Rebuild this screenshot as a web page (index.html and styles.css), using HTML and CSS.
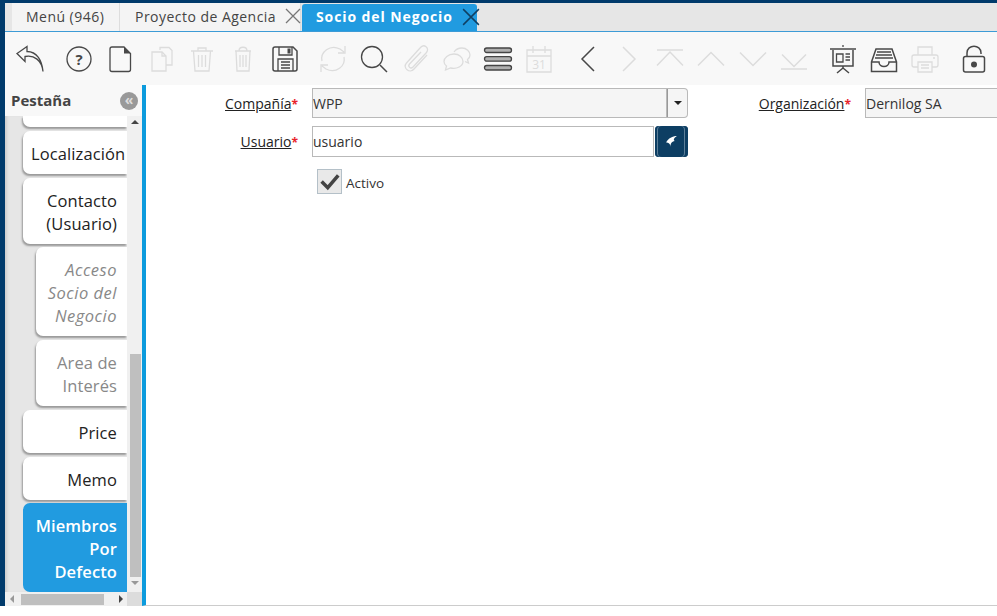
FILE: index.html

```html
<!DOCTYPE html>
<html lang="es">
<head>
<meta charset="UTF-8">
<title>Socio del Negocio</title>
<link rel="stylesheet" href="styles.css">
</head>
<body>
<div class="app">
  <div class="tabbar">
    <div class="wintab first">Menú (946)</div>
    <div class="wintab">Proyecto de Agencia
      <svg class="close" viewBox="0 0 16 16"><path d="M1 1L15 15M15 1L1 15"/></svg>
    </div>
    <div class="wintab current">Socio del Negocio
      <svg class="close" viewBox="0 0 16 16"><path d="M1 1L15 15M15 1L1 15"/></svg>
    </div>
  </div>

  <div class="toolbar">
    <button class="tool"><svg viewBox="0 0 32 32"><path d="M13 3.5L3 10.5L11 18.5V13.5C20 11.5 28 17.5 29 28.5C28 17.5 23 8.5 13 8.5Z"/></svg></button>
    <button class="tool sep"><svg viewBox="0 0 32 32"><circle cx="16" cy="16" r="12"/><text x="16" y="21.5" class="glyph">?</text></svg></button>
    <button class="tool"><svg viewBox="0 0 32 32"><path d="M8 4H20L26.5 10.5V26.5a2 2 0 0 1-2 2H8a2 2 0 0 1-2-2V6a2 2 0 0 1 2-2Z"/><path class="solid" d="M20 4V10.5H26.5Z"/></svg></button>
    <button class="tool off"><svg viewBox="0 0 32 32"><path d="M15 7V4.5H24L27 7.5V22H21"/><path d="M7 9H17L21 13V28H7Z"/><path d="M17 9V13H21"/></svg></button>
    <button class="tool off"><svg viewBox="0 0 32 32"><path d="M5 8H27M12 8V5H20V8M7.5 8L9 28H23L24.5 8M12.5 12V24M16 12V24M19.5 12V24"/></svg></button>
    <button class="tool off"><svg viewBox="0 0 32 32"><path d="M8 8H24M12 8C12 3 20 3 20 8M9 8L10 28H22L23 8M13 12V24M16 12V24M19 12V24"/></svg></button>
    <button class="tool"><svg viewBox="0 0 32 32"><path class="bold" d="M6 4H24L28 8V26a2 2 0 0 1-2 2H6a2 2 0 0 1-2-2V6a2 2 0 0 1 2-2Z"/><path d="M10 4V12H23V4M9 28V16H24V28"/><path class="solid" d="M18.5 5.500H21.5V10.5H18.5Z"/><path d="M12 19H21M12 22H21M12 25H21"/></svg></button>
    <button class="tool sep off"><svg viewBox="0 0 32 32"><path d="M5 18C3 9 13 1 23 6L27 9M28 3V10H21M27 14C29 23 19 31 9 26L5 23M4 29V22H11"/></svg></button>
    <button class="tool"><svg viewBox="0 0 32 32"><circle cx="14" cy="14" r="10.5"/><path class="bold" d="M22 22L29 29"/></svg></button>
    <button class="tool off"><svg viewBox="0 0 32 32"><path d="M27 12L14 26C10 31 2 25 6.5 20L20 5C24 0 30 5 26.5 9.5L13 24C10.5 26.5 7.5 23.5 9.5 21L21 9"/></svg></button>
    <button class="tool off"><svg viewBox="0 0 32 32"><path d="M13 11C7 11 3 15 3 18.5C3 20.5 4 22 5.5 23L4.5 27L9.5 25C16 26.5 22 23 22 18.5C22 14.5 18 11 13 11Z"/><path d="M13 9C15 6 18.5 5 21 5C25.5 5 29 8.5 29 12C29 14 28 15.5 26.5 16.5L27.5 20L24 18.5"/></svg></button>
    <button class="tool"><svg viewBox="0 0 32 32"><rect class="bar" x="2.5" y="5" width="27" height="4.500" rx="2.2"/><rect class="bar" x="2.5" y="13.700" width="27" height="4.500" rx="2.2"/><rect class="bar" x="2.5" y="22.500" width="27" height="4.500" rx="2.2"/></svg></button>
    <button class="tool off"><svg viewBox="0 0 32 32"><path d="M4 7H28V29H4ZM4 13H28M10 3V10M22 3V10"/><text x="16" y="26" class="cal">31</text></svg></button>
    <button class="tool sep"><svg viewBox="0 0 32 32"><path class="bold" d="M22 4L10 16L22 28"/></svg></button>
    <button class="tool off"><svg viewBox="0 0 32 32"><path class="bold" d="M10 4L22 16L10 28"/></svg></button>
    <button class="tool off"><svg viewBox="0 0 32 32"><path class="bold" d="M3 7H29M3 22.500L16 9L29 22.500"/></svg></button>
    <button class="tool off"><svg viewBox="0 0 32 32"><path class="bold" d="M3 22.500L16 9.500L29 22.500"/></svg></button>
    <button class="tool off"><svg viewBox="0 0 32 32"><path class="bold" d="M3 9.500L16 22.500L29 9.500"/></svg></button>
    <button class="tool off"><svg viewBox="0 0 32 32"><path class="bold" d="M4 11.500L16 23.500L28 11.500M3 26H29"/></svg></button>
    <button class="tool sep"><svg viewBox="0 0 32 32"><path class="bold" d="M3 6H29"/><path d="M16 2V4"/><path class="bold" d="M6 7V23H26V7M16 23V26M16 25L10 30M16 25L22 30"/><path d="M9.5 11H16V19H9.5ZM18.5 11H23M18.5 14H23M18.5 17H23"/></svg></button>
    <button class="tool"><svg viewBox="0 0 32 32"><path class="bold" d="M3.5 19V28.5H28.5V19L24 6H8Z"/><path class="bold" d="M3.5 19H11C11 25 21 25 21 19H28.5"/><path d="M9 9H23M8 12H24M7 15H25"/></svg></button>
    <button class="tool off"><svg viewBox="0 0 32 32"><path d="M9 12V4H23V12M9 24H5a2 2 0 0 1-2-2V14a2 2 0 0 1 2-2H27a2 2 0 0 1 2 2V22a2 2 0 0 1-2 2H23"/><path d="M9 19H23V29H9ZM12 22H20M12 25H20M24 15H26"/></svg></button>
    <button class="tool sep"><svg viewBox="0 0 32 32"><path class="bold" d="M9 13V10C9 1 23 1 23 10V11"/><rect class="bold" x="5.5" y="13.500" width="21" height="15.500" rx="2"/><circle class="solid" cx="16" cy="21.500" r="3"/></svg></button>
  </div>

  <div class="content">
    <aside class="sidebar">
      <div class="side-head">
        <span class="side-title">Pestaña</span>
        <span class="collapse">«</span>
      </div>
      <div class="side-body">
        <div class="tab-list">
          <div class="tab cut"></div>
          <div class="tab">Localización</div>
          <div class="tab">Contacto<br>(Usuario)</div>
          <div class="tab sub tight"><em>Acceso<br>Socio del<br>Negocio</em></div>
          <div class="tab sub">Area de<br>Interés</div>
          <div class="tab">Price</div>
          <div class="tab">Memo</div>
          <div class="tab active tight">Miembros<br>Por<br>Defecto</div>
        </div>
        <div class="vscroll">
          <span class="arrow up"></span>
          <span class="vtrack"><span class="vthumb"></span></span>
          <span class="arrow down"></span>
        </div>
      </div>
      <div class="hscroll">
        <span class="arrow left"></span>
        <span class="hthumb"></span>
        <span class="arrow right"></span>
        <span class="corner"></span>
      </div>
    </aside>

    <main class="form-area">
      <div class="form">
        <label class="lbl"><u>Compañía</u><b>*</b></label>
        <div class="combo">
          <input class="field ro" type="text" value="WPP" readonly>
          <span class="combo-btn"><span class="caret"></span></span>
        </div>
        <label class="lbl"><u>Organización</u><b>*</b></label>
        <input class="field ro" type="text" value="Dernilog SA" readonly>

        <label class="lbl"><u>Usuario</u><b>*</b></label>
        <div class="combo">
          <input class="field" type="text" value="usuario">
          <span class="search-btn"><svg viewBox="0 0 12 12"><path d="M11 1C7 1 3 3 1 7C3 7 5 8 5 11C5 8 6 6 9 5.500C7.5 5 8 3 11 1Z"/></svg></span>
        </div>
        <div class="check-row">
          <span class="checkbox"><svg viewBox="0 0 24 24"><path d="M3 12L10 19L22 5"/></svg></span>
          <span>Activo</span>
        </div>
      </div>
    </main>
  </div>
</div>
</body>
</html>
```

FILE: styles.css

```css
html, body {
  margin: 0;
  height: 100%;
  background: white;
  overflow: hidden;
}
body {
  font-family: "Open Sans", sans-serif;
  font-size: 14px;
  color: #333;
}
.app {
  display: flex;
  flex-direction: column;
  height: 606px;
  border-top: 3px solid #003a6b;
  border-left: 5px solid #003a6b;
  box-sizing: border-box;
}

/* window tabs */
.tabbar {
  display: flex;
  height: 29px;
  flex: none;
  box-sizing: border-box;
  background: #e6e6e6;
  border-bottom: 1px solid #3d9bd6;
}
.wintab {
  display: flex;
  align-items: center;
  gap: 9px;
  height: 28px;
  padding: 0 0 2px 15px;
  box-sizing: border-box;
  width: 181px;
  background: #f4f4f4;
  border-right: 1px solid #ddd;
  color: #444;
  letter-spacing: 0.47px;
  white-space: nowrap;
}
.wintab.first {
  width: 108px;
  margin-left: 7px;
  padding-left: 14px;
}
.wintab.current {
  width: 175px;
  margin-left: 1px;
  margin-top: 1px;
  height: 27px;
  padding-left: 14px;
  background: #219be0;
  color: white;
  font-weight: 700;
  letter-spacing: 0.9px;
  border-right: none;
  border-radius: 3px 3px 0 0;
}
.close {
  width: 16px;
  height: 16px;
  flex: none;
  margin-left: auto;
}
.wintab.current .close {
  width: 18px;
  height: 18px;
}
.close path {
  fill: none;
  stroke: #777;
  stroke-width: 1.3;
}
.wintab.current .close path {
  stroke: #0f3f62;
}

/* toolbar */
.toolbar {
  display: flex;
  align-items: center;
  flex: none;
  height: 53px;
  padding-left: 4.4px;
  background: #f8f8f8;
}
.tool {
  width: 41.2px;
  height: 41px;
  flex: none;
  display: flex;
  align-items: center;
  justify-content: center;
  padding: 0;
  background: none;
  border: none;
}
.tool.sep {
  margin-left: 7.5px;
}
.tool svg {
  width: 32px;
  height: 32px;
}
.tool path, .tool circle, .tool rect {
  fill: none;
  stroke: #484848;
  stroke-width: 1.3;
}
.tool .bold {
  stroke-width: 1.5;
}
.tool .solid {
  fill: #484848;
  stroke: none;
}
.tool .bar {
  fill: #b0b0b0;
  stroke: #444;
  stroke-width: 1.3;
}
.tool text {
  fill: #484848;
  text-anchor: middle;
  font-family: "Open Sans", sans-serif;
}
.tool .glyph {
  font-size: 15px;
  font-weight: 700;
}
.tool .cal {
  font-size: 12px;
}
.tool.off path, .tool.off rect, .tool.off circle {
  stroke: #dcdcdc;
}
.tool.off text {
  fill: #dcdcdc;
}

/* sidebar + form */
.content {
  display: flex;
  flex: 1;
  min-height: 0;
}
.sidebar {
  display: flex;
  flex-direction: column;
  width: 137px;
  flex: none;
  background: #f8f8f8;
}
.side-head {
  display: flex;
  align-items: center;
  justify-content: space-between;
  height: 31px;
  flex: none;
  padding: 0 4px 2px 6px;
  box-sizing: border-box;
}
.side-title {
  font-size: 15px;
  font-weight: 700;
  color: #444;
}
.collapse {
  width: 18px;
  height: 18px;
  margin-top: 2px;
  border-radius: 50%;
  background: #999;
  color: #ddd;
  font-size: 14px;
  font-weight: 700;
  line-height: 15px;
  text-align: center;
}
.side-body {
  display: flex;
  flex: 1;
  min-height: 0;
}
.tab-list {
  flex: 1;
  display: flex;
  flex-direction: column;
  gap: 4px;
  overflow: hidden;
  padding-left: 18px;
  background: #e6e6e6;
  box-shadow: inset 4px 0 3px -2px #ccc;
}
.tab {
  flex: none;
  padding: 11px 10px 9px 8px;
  background: white;
  border-radius: 7px 0 0 7px;
  box-shadow: -1px 2px 2px #999;
  font-size: 16.5px;
  letter-spacing: 0.1px;
  line-height: 23px;
  text-align: right;
  color: #222;
  white-space: nowrap;
}
.tab.cut {
  height: 11px;
  padding: 0;
  border-radius: 0 0 0 7px;
}
.tab.sub {
  margin-left: 13px;
  padding-left: 8px;
  color: #888;
}
.tab em {
  letter-spacing: 0.5px;
}
.tab.tight {
  margin-top: -1px;
}
.tab.active {
  background: #219be0;
  color: white;
  font-weight: 600;
  box-shadow: none;
}
.vscroll {
  width: 15px;
  flex: none;
  display: flex;
  flex-direction: column;
  align-items: center;
  background: #f0f0f0;
}
.vtrack {
  flex: 1;
  display: flex;
  flex-direction: column;
  justify-content: flex-end;
  width: 100%;
}
.vthumb {
  display: block;
  height: 223px;
  margin: 0 1px 0 3px;
  background: #bfbfbf;
}
.hscroll {
  display: flex;
  align-items: center;
  height: 14px;
  flex: none;
  background: #f0f0f0;
}
.hthumb {
  width: 83px;
  height: 11px;
  margin-left: 7px;
  background: #bfbfbf;
}
.corner {
  width: 15px;
  height: 14px;
  margin-left: auto;
  background: #dcdcdc;
}
.arrow {
  width: 0;
  height: 0;
  flex: none;
  border-style: solid;
  border-color: transparent;
}
.arrow.up {
  margin: 4px 0;
  border-width: 0 4px 4px;
  border-bottom-color: #444;
}
.arrow.down {
  margin: 4px 0 7px;
  border-width: 4px 4px 0;
  border-top-color: #999;
}
.arrow.left {
  margin-left: 5px;
  border-width: 4px 4px 4px 0;
  border-right-color: #999;
}
.arrow.right {
  margin-left: 15px;
  border-width: 4px 0 4px 4px;
  border-left-color: #444;
}

.form-area {
  flex: 1;
  min-width: 0;
  overflow: hidden;
  border-left: 4px solid #0c9bdd;
  border-bottom: 1px solid #ccc;
  background: white;
}
.form {
  display: grid;
  grid-template-columns: 152px 376px 149px 200px;
  grid-template-rows: 30px 31px 29px;
  column-gap: 14px;
  row-gap: 8px;
  padding-top: 3px;
}
.lbl {
  text-align: right;
  color: #222;
  line-height: 31px;
  white-space: nowrap;
}
.lbl b {
  color: #e8232a;
  font-size: 12px;
  font-weight: 700;
}
.combo {
  display: flex;
}
.field {
  flex: 1;
  min-width: 0;
  width: 100%;
  height: 100%;
  box-sizing: border-box;
  margin: 0;
  padding: 0 1px 0 0;
  border: 1px solid #b9b9b9;
  background: white;
  font: inherit;
  color: #333;
  outline: none;
}
.field.ro {
  background: #f5f5f5;
}
.combo-btn {
  display: flex;
  align-items: center;
  justify-content: center;
  width: 21px;
  flex: none;
  box-sizing: border-box;
  border: 1px solid #b9b9b9;
  border-left: 1px solid #999;
  border-radius: 0 4px 4px 0;
  background: #f5f5f5;
}
.caret {
  border-style: solid;
  border-width: 4px 4px 0;
  border-color: #222 transparent transparent;
}
.search-btn {
  display: flex;
  align-items: center;
  justify-content: center;
  width: 33px;
  flex: none;
  margin-left: 1px;
  border-radius: 4px;
  background: #0d3e63;
  box-shadow: inset 2px 0 0 #0d3e63, inset 3px 0 0 #5d7f99, inset -3px 0 0 #0d3e63, inset -4px 0 0 #5d7f99;
}
.search-btn svg {
  width: 13px;
  height: 13px;
}
.search-btn path {
  fill: white;
}
.check-row {
  grid-column: 2;
  grid-row: 3;
  display: flex;
  align-items: center;
  gap: 4px;
  margin-top: 4px;
  padding-left: 5px;
  font-size: 13.5px;
  color: #333;
}
.check-row span:last-child {
  padding-top: 2px;
}
.checkbox {
  width: 25px;
  height: 25px;
  flex: none;
  box-sizing: border-box;
  border: 1px solid #b4c0c8;
  background: #e9e9e9;
  display: flex;
  align-items: center;
  justify-content: center;
}
.checkbox svg {
  width: 21px;
  height: 21px;
}
.checkbox path {
  fill: none;
  stroke: #444;
  stroke-width: 4;
}
```
